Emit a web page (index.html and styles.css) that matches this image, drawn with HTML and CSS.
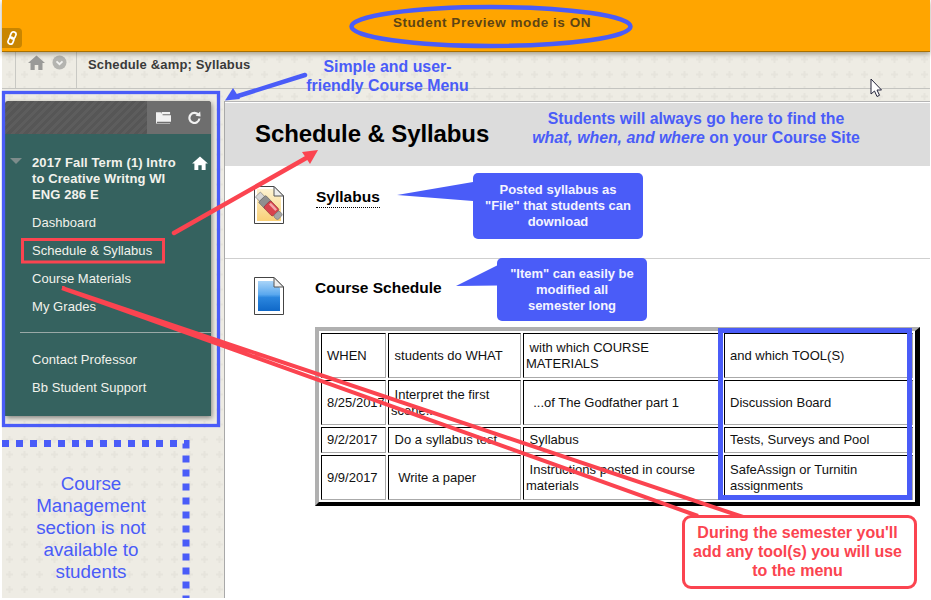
FILE: index.html
```html
<!DOCTYPE html>
<html lang="en">
<head>
    <meta charset="UTF-8">
    <meta name="viewport" content="width=device-width, initial-scale=1.0">
    <title>Schedule &amp; Syllabus</title>
    <link rel="stylesheet" href="styles.css">
</head>
<body>
    <div class="page">
        <div class="preview-bar">
            <a class="link-badge" href="#">
                <svg width="12" height="14" viewBox="0 0 12 14" fill="none" stroke="#fff" stroke-width="1.7">
                    <rect x="4.6" y="0.8" width="5" height="7" rx="2.4" transform="rotate(22 7 4.3)"/>
                    <rect x="2.4" y="6.2" width="5" height="7" rx="2.4" transform="rotate(22 5 9.7)"/>
                </svg>
            </a>
            <span class="preview-text">Student Preview mode is ON</span>
        </div>

        <div class="crumb-bar">
            <div class="crumb-icons">
                <svg width="17" height="15" viewBox="0 0 17 15" fill="#9a9a98">
                    <path d="M8.5 0.5 L17 8 H14.5 V15 H10.3 V10 H6.7 V15 H2.5 V8 H0 Z"/>
                </svg>
                <svg width="15" height="15" viewBox="0 0 15 15">
                    <circle cx="7.5" cy="7.5" r="7" fill="#b4b4b0"/>
                    <path d="M4.5 6.3 L7.5 9.2 L10.5 6.3" fill="none" stroke="#f2f2f0" stroke-width="1.8"/>
                </svg>
            </div>
            <span class="crumb-text">Schedule &amp;amp; Syllabus</span>
        </div>

        <div class="main">
            <div class="sidebar">
                <div class="course-menu">
                    <div class="menu-head">
                        <div class="menu-tools">
                            <svg width="15" height="13" viewBox="0 0 16 13" fill="#f1f1f1">
                                <path d="M0 1 H5 L6 2.5 V0.5 H15 V3 H7 V4 H16 V11 H1 V12.4 H15 V13 H0 Z"/>
                            </svg>
                            <svg width="13" height="13" viewBox="0 0 13 13" fill="none">
                                <path d="M10.6 4.2 A5 5 0 1 0 11.4 7.5" stroke="#f1f1f1" stroke-width="2.2"/>
                                <path d="M7.6 4.8 L12.6 5.6 L12.2 0.6 Z" fill="#f1f1f1"/>
                            </svg>
                        </div>
                    </div>
                    <div class="menu-body">
                        <div class="course-title">
                            <span class="collapse-arrow"></span>
                            <span class="course-name">2017 Fall Term (1) Intro to Creative Writng WI ENG 286 E</span>
                            <svg class="course-home" width="16" height="14" viewBox="0 0 17 15" fill="#fff">
                                <path d="M8.5 0.5 L17 8 H14.5 V15 H10.3 V10 H6.7 V15 H2.5 V8 H0 Z"/>
                            </svg>
                        </div>
                        <ul class="menu-list">
                            <li>Dashboard</li>
                            <li>Schedule &amp; Syllabus</li>
                            <li>Course Materials</li>
                            <li>My Grades</li>
                        </ul>
                        <hr class="menu-rule">
                        <ul class="menu-list">
                            <li>Contact Professor</li>
                            <li>Bb Student Support</li>
                        </ul>
                    </div>
                </div>
            </div>

            <div class="content">
                <div class="content-head">
                    <h1>Schedule &amp; Syllabus</h1>
                </div>

                <div class="item item-file">
                    <svg class="item-icon" width="30" height="38" viewBox="0 0 30 38">
                        <defs>
                            <linearGradient id="fileFill" x1="0" y1="0" x2="0" y2="1">
                                <stop offset="0" stop-color="#fdf3d2"/>
                                <stop offset="1" stop-color="#f9d077"/>
                            </linearGradient>
                        </defs>
                        <path d="M0.5 0.5 H20 L29.5 10 V37.5 H0.5 Z" fill="#fff" stroke="#444"/>
                        <path d="M3 3 H19 L27 11 V35 H3 Z" fill="url(#fileFill)"/>
                        <path d="M20 0.5 V10 H29.5 Z" fill="#eee" stroke="#555"/>
                        <g transform="rotate(46 15 20)">
                            <rect x="-1" y="16.5" width="6" height="7" fill="#d6d6d6" stroke="#777" stroke-width="0.6"/>
                            <rect x="5" y="15" width="9" height="10" rx="1" fill="#8f8f8f" stroke="#555" stroke-width="0.5"/>
                            <rect x="12" y="15" width="13" height="10" rx="2" fill="#d8434d" stroke="#7d2a30" stroke-width="0.5"/>
                            <rect x="14" y="16.5" width="9" height="2.5" fill="#f3a7aa"/>
                            <rect x="25" y="16" width="6" height="8" rx="2" fill="#a5a5a5" stroke="#666" stroke-width="0.5"/>
                        </g>
                    </svg>
                    <a class="item-link" href="#">Syllabus</a>
                </div>

                <div class="item-course">
                    <div class="item-row">
                        <svg class="item-icon" width="30" height="38" viewBox="0 0 30 38">
                            <defs>
                                <linearGradient id="docFill" x1="0" y1="0" x2="0" y2="1">
                                    <stop offset="0" stop-color="#a9d4f8"/>
                                    <stop offset="0.45" stop-color="#5aa8ee"/>
                                    <stop offset="0.55" stop-color="#2b86de"/>
                                    <stop offset="1" stop-color="#0f68c8"/>
                                </linearGradient>
                            </defs>
                            <path d="M0.5 0.5 H20 L29.5 10 V37.5 H0.5 Z" fill="#fff" stroke="#444"/>
                            <path d="M4 4 H19 L26 11 V34 H4 Z" fill="url(#docFill)"/>
                            <path d="M20 0.5 V10 H29.5 Z" fill="#eee" stroke="#555"/>
                        </svg>
                        <span class="item-title">Course Schedule</span>
                    </div>

                    <table class="schedule">
                        <tr class="row-tall">
                            <td class="col-when">WHEN</td>
                            <td class="col-what">&nbsp;students do WHAT</td>
                            <td class="col-material">&nbsp;with which COURSE MATERIALS</td>
                            <td class="col-tool">and which TOOL(S)</td>
                        </tr>
                        <tr class="row-tall">
                            <td class="col-when">8/25/2017</td>
                            <td class="col-what">&nbsp;Interpret the first scene...</td>
                            <td class="col-material">&nbsp; ...of The Godfather part 1</td>
                            <td class="col-tool">Discussion Board</td>
                        </tr>
                        <tr class="row-short">
                            <td class="col-when">9/2/2017</td>
                            <td class="col-what">&nbsp;Do a syllabus test</td>
                            <td class="col-material">&nbsp;Syllabus</td>
                            <td class="col-tool">Tests, Surveys and Pool</td>
                        </tr>
                        <tr class="row-tall">
                            <td class="col-when">9/9/2017</td>
                            <td class="col-what">&nbsp; Write a paper</td>
                            <td class="col-material">&nbsp;Instructions posted in course materials</td>
                            <td class="col-tool">SafeAssign or Turnitin assignments</td>
                        </tr>
                    </table>
                </div>
            </div>
        </div>

        <!-- annotations drawn on top of the screenshot -->
        <svg class="marks" width="931" height="600" viewBox="0 0 931 600">
            <ellipse cx="491" cy="26.5" rx="139.5" ry="19.5" fill="none" stroke="#4a5cf8" stroke-width="4.5"/>
            <rect x="3.5" y="92.5" width="215" height="333" fill="none" stroke="#4a5cf8" stroke-width="3.3"/>
            <path d="M305 75 L238 96" stroke="#4a5cf8" stroke-width="4.5" stroke-linecap="round" fill="none"/>
            <path d="M225 100.5 L233 88 L240 99 Z" fill="#4a5cf8"/>
            <path d="M2 443.5 H186 V598" fill="none" stroke="#4a5cf8" stroke-width="7" stroke-dasharray="7 7"/>
            <path d="M397 195 L473 182 V201 Z" fill="#4a5cf8"/>
            <path d="M456 286 L498 265 V285.5 Z" fill="#4a5cf8"/>
            <path d="M174 233 L308 157" stroke="#fb4450" stroke-width="4.5" stroke-linecap="round" fill="none"/>
            <path d="M318 150 L302 152 L310 164 Z" fill="#fb4450"/>
            <rect x="22.5" y="239.5" width="141" height="22.5" fill="none" stroke="#fb4450" stroke-width="3"/>
            <path d="M698 516 L62 288 L743 517" fill="none" stroke="#fb4450" stroke-width="4"/>
            <rect x="720.5" y="330.5" width="189" height="167" fill="none" stroke="#4a5cf8" stroke-width="5"/>
            <path d="M871 79 V94 L874.5 91 L877 96.5 L879.5 95.3 L877 90 H881.5 Z" fill="#fff" stroke="#23233a" stroke-width="1"/>
        </svg>

        <div class="note note-menu">Simple and user-<br>friendly Course Menu</div>
        <div class="note note-site">Students will always go here to find the<br><em>what, when, and where</em> on your Course Site</div>
        <div class="note note-manage">Course Management section is not available to students</div>
        <div class="bubble bubble-file">Posted syllabus as<br>"File" that students can<br>download</div>
        <div class="bubble bubble-item">"Item" can easily be<br>modified all<br>semester long</div>
        <div class="bubble-red">During the semester you'll<br>add any tool(s) you will use<br>to the menu</div>
    </div>
</body>
</html>
```

FILE: styles.css
```css
* {
    box-sizing: border-box;
}

body {
    margin: 0;
    background-color: #ffffff;
    font-family: 'Liberation Sans', Arial, sans-serif;
    color: #111;
}

.page {
    position: relative;
    width: 931px;
    height: 600px;
    padding: 0 1px 2px 2px;
    overflow: hidden;
    display: flex;
    flex-direction: column;
}

/* top bar */
.preview-bar {
    flex: none;
    height: 52px;
    display: flex;
    justify-content: center;
    background-color: #ffa500;
    border-bottom: 1px solid #a97000;
    box-shadow: 0 2px 5px rgba(70, 60, 30, 0.45);
    position: relative;
    z-index: 1;
}

.preview-text {
    margin: 14px 0 0 52px;
    font-size: 13.5px;
    line-height: 18px;
    font-weight: bold;
    letter-spacing: 0.55px;
    color: #5c4415;
}

.link-badge {
    position: absolute;
    left: 0;
    top: 28px;
    width: 20px;
    height: 20px;
    display: flex;
    align-items: center;
    justify-content: center;
    background-color: #c98500;
    border-radius: 0 4px 4px 0;
}

/* page background */
.crumb-bar,
.sidebar,
.main {
    background-color: #eeece4;
    background-image: url("data:image/svg+xml,%3Csvg xmlns='http://www.w3.org/2000/svg' width='15' height='15'%3E%3Cpath d='M6.5 4h2v2.5H11v2H8.5V11h-2V8.5H4v-2h2.5z' fill='%23e6e4dc'/%3E%3C/svg%3E");
}

.crumb-bar {
    flex: none;
    height: 37px;
    display: flex;
    align-items: stretch;
    padding-left: 13px;
    border-bottom: 1px solid #c4c4c0;
}

.crumb-icons {
    width: 62px;
    display: flex;
    align-items: flex-start;
    gap: 7px;
    padding: 3px 0 0 12px;
    border-left: 1px solid #c9c9c4;
    border-right: 1px solid #c9c9c4;
}

.crumb-text {
    margin: 4px 0 0 11px;
    font-size: 13px;
    line-height: 18px;
    font-weight: bold;
    letter-spacing: 0.15px;
    color: #3a3a3a;
}

.main {
    flex: 1;
    display: flex;
    padding-top: 12px;
}

/* left column */
.sidebar {
    width: 223px;
    flex: none;
    padding-left: 3px;
    background-position: 0 -89px;
    border-right: 1px solid #a9a9a9;
}

.course-menu {
    width: 206px;
    height: 315px;
    border-radius: 3px 3px 0 0;
    box-shadow: 1px 2px 5px rgba(0, 0, 0, 0.45);
}

.menu-head {
    height: 33px;
    display: flex;
    justify-content: flex-end;
    border-radius: 3px 3px 0 0;
    background: repeating-linear-gradient(135deg, #565656, #565656 3px, #5d5d5d 3px, #5d5d5d 6px);
}

.menu-tools {
    width: 64px;
    display: flex;
    align-items: center;
    gap: 17px;
    padding: 0 0 0 9px;
    background-color: #6e6e6e;
    border-radius: 0 3px 0 0;
}

.menu-body {
    height: 282px;
    padding-top: 21px;
    background-color: #35625f;
    color: #f2f2ec;
    font-size: 13px;
    letter-spacing: 0.05px;
}

.course-title {
    display: flex;
    align-items: flex-start;
    height: 54px;
    padding-left: 5px;
}

.collapse-arrow {
    width: 0;
    height: 0;
    margin-top: 3px;
    border-left: 6px solid transparent;
    border-right: 6px solid transparent;
    border-top: 6px solid #7d8c8b;
}

.course-name {
    width: 150px;
    margin-left: 10px;
    font-weight: bold;
    line-height: 16px;
    letter-spacing: 0.1px;
}

.course-home {
    margin: 1px 0 0 10px;
}

.menu-list {
    list-style-type: none;
    margin: 0;
    padding: 0 0 0 27px;
}

.menu-list li {
    height: 28px;
    line-height: 16px;
    padding-top: 6px;
}

.menu-rule {
    height: 1px;
    margin: 11px 0 13px 15px;
    border: none;
    background-color: #9aa9a7;
}

/* right column */
.content {
    flex: 1;
    background-color: #ffffff;
    border-top: 1px solid #b5b5b5;
}

.content-head {
    height: 63px;
    margin-top: 1px;
    padding: 16px 0 0 30px;
    background-color: #dcdcdc;
}

h1 {
    margin: 0;
    font-size: 24px;
    line-height: 30px;
    letter-spacing: -0.1px;
    color: #000;
}

.item {
    height: 93px;
    display: flex;
    align-items: flex-start;
    padding: 20px 0 0 29px;
    border-bottom: 1px solid #cfcfcf;
}

.item-link {
    margin: 2px 0 0 32px;
    padding-bottom: 1px;
    font-size: 15.5px;
    line-height: 18px;
    font-weight: bold;
    color: #000;
    text-decoration: none;
    border-bottom: 1px dotted #000;
}

.item-course {
    padding: 18px 0 0 29px;
}

.item-row {
    display: flex;
    align-items: flex-start;
}

.item-title {
    margin: 2px 0 0 31px;
    font-size: 15.5px;
    line-height: 18px;
    font-weight: bold;
    color: #000;
}

.schedule {
    width: 603px;
    margin: 12px 0 0 61px;
    table-layout: fixed;
    border-collapse: separate;
    border-spacing: 2px;
    border-style: solid;
    border-width: 4px 5px 4px 4px;
    border-color: #b0b0b0 #000 #000 #b0b0b0;
    font-size: 13px;
    color: #111;
}

.schedule td {
    line-height: 16px;
    border-style: solid;
    border-width: 1px;
    border-color: #000 #aaa #aaa #000;
}

.col-when { width: 65px; padding: 0 0 0 5px; }
.col-what { width: 133px; padding: 0 2px; }
.col-material { width: 199px; padding: 0 2px; }
.col-tool { width: 189px; padding: 0 5px; }

.row-tall { height: 45px; }
.row-short { height: 26px; }

/* annotations */
.marks {
    position: absolute;
    left: 0;
    top: 0;
    z-index: 2;
    pointer-events: none;
}

.note,
.bubble,
.bubble-red {
    position: absolute;
    z-index: 3;
    text-align: center;
}

.note {
    color: #4a5cf8;
}

.note em {
    font-style: italic;
}

.note-menu {
    left: 287.5px;
    top: 57px;
    width: 200px;
    font-size: 15.9px;
    line-height: 19px;
    font-weight: bold;
}

.note-site {
    left: 496px;
    top: 109px;
    width: 400px;
    font-size: 15.85px;
    line-height: 19px;
    font-weight: bold;
}

.note-manage {
    left: 21px;
    top: 473px;
    width: 140px;
    font-size: 18.8px;
    line-height: 22px;
}

.bubble {
    display: flex;
    align-items: center;
    justify-content: center;
    font-size: 13px;
    line-height: 16px;
    font-weight: bold;
    color: #f4f4ff;
    background-color: #4a5cf8;
    border-radius: 5px;
}

.bubble-file {
    left: 473px;
    top: 173px;
    width: 170px;
    height: 66px;
}

.bubble-item {
    left: 497px;
    top: 258px;
    width: 150px;
    height: 63px;
}

.bubble-red {
    left: 682px;
    top: 515px;
    width: 235px;
    height: 74px;
    padding: 5px 4px 0 0;
    font-size: 16px;
    line-height: 19px;
    font-weight: bold;
    color: #fb4450;
    background-color: #ffffff;
    border: 3px solid #fb4450;
    border-radius: 9px;
}
```
